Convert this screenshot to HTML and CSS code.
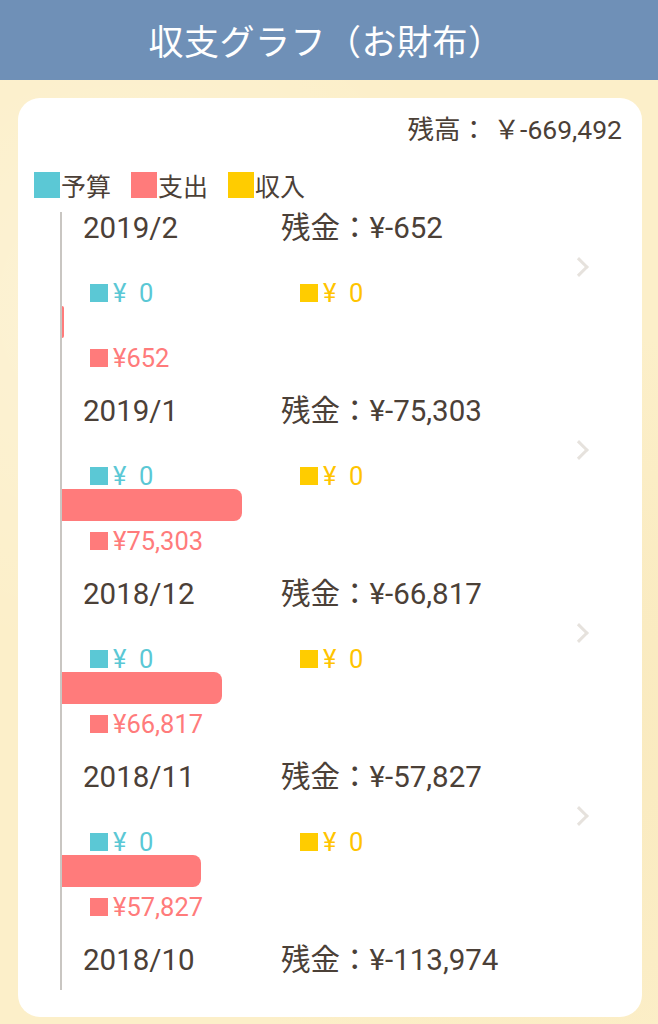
FILE: index.html
```html
<!DOCTYPE html>
<html lang="ja">
<head>
    <meta charset="UTF-8">
    <meta name="viewport" content="width=device-width, initial-scale=1.0">
    <title>収支グラフ（お財布）</title>
    <link rel="stylesheet" href="styles.css">
</head>
<body>
    <header id="title-bar">収支グラフ（お財布）</header>
    <div id="graph-card">
        <div id="balance">残高： ￥-669,492</div>
        <div id="legend">
            <span class="legend-item"><i class="swatch budget"></i>予算</span>
            <span class="legend-item"><i class="swatch expense"></i>支出</span>
            <span class="legend-item"><i class="swatch income"></i>収入</span>
        </div>
        <div id="month-list">
            <div class="month">
                <div class="month-head">
                    <span class="month-date">2019/2</span>
                    <span class="month-rest">残金：¥-652</span>
                </div>
                <div class="month-sub">
                    <span class="amount budget-text"><i class="dot budget"></i>¥&nbsp;&nbsp;0</span>
                    <span class="amount income-text"><i class="dot income"></i>¥&nbsp;&nbsp;0</span>
                </div>
                <div class="bar-row"><div class="bar" style="width: 2px"></div></div>
                <div class="amount expense-text"><i class="dot expense"></i>¥652</div>
                <span class="chevron"></span>
            </div>
            <div class="month">
                <div class="month-head">
                    <span class="month-date">2019/1</span>
                    <span class="month-rest">残金：¥-75,303</span>
                </div>
                <div class="month-sub">
                    <span class="amount budget-text"><i class="dot budget"></i>¥&nbsp;&nbsp;0</span>
                    <span class="amount income-text"><i class="dot income"></i>¥&nbsp;&nbsp;0</span>
                </div>
                <div class="bar-row"><div class="bar" style="width: 180px"></div></div>
                <div class="amount expense-text"><i class="dot expense"></i>¥75,303</div>
                <span class="chevron"></span>
            </div>
            <div class="month">
                <div class="month-head">
                    <span class="month-date">2018/12</span>
                    <span class="month-rest">残金：¥-66,817</span>
                </div>
                <div class="month-sub">
                    <span class="amount budget-text"><i class="dot budget"></i>¥&nbsp;&nbsp;0</span>
                    <span class="amount income-text"><i class="dot income"></i>¥&nbsp;&nbsp;0</span>
                </div>
                <div class="bar-row"><div class="bar" style="width: 160px"></div></div>
                <div class="amount expense-text"><i class="dot expense"></i>¥66,817</div>
                <span class="chevron"></span>
            </div>
            <div class="month">
                <div class="month-head">
                    <span class="month-date">2018/11</span>
                    <span class="month-rest">残金：¥-57,827</span>
                </div>
                <div class="month-sub">
                    <span class="amount budget-text"><i class="dot budget"></i>¥&nbsp;&nbsp;0</span>
                    <span class="amount income-text"><i class="dot income"></i>¥&nbsp;&nbsp;0</span>
                </div>
                <div class="bar-row"><div class="bar" style="width: 139px"></div></div>
                <div class="amount expense-text"><i class="dot expense"></i>¥57,827</div>
                <span class="chevron"></span>
            </div>
            <!-- 一番下の月はスクロールの途中で切れている -->
            <div class="month">
                <div class="month-head">
                    <span class="month-date">2018/10</span>
                    <span class="month-rest">残金：¥-113,974</span>
                </div>
            </div>
        </div>
    </div>
</body>
</html>
```

FILE: styles.css
```css
html, body {
    margin: 0;
    padding: 0;
    height: 100%;
    overflow: hidden;
}
body {
    /* クリーム色の紙っぽい背景 */
    background-color: #fcefc9;
    background-image:
        radial-gradient(circle at 20% 30%, rgba(255, 255, 255, 0.25), transparent 40%),
        radial-gradient(circle at 80% 70%, rgba(240, 214, 150, 0.25), transparent 45%);
    color: #4b4037;
    font-family: Roboto, "Noto Sans CJK JP", sans-serif;
}
#title-bar {
    height: 80px;
    line-height: 80px;
    background-color: #6f90b7;
    color: white;
    text-align: center;
    font-size: 35px;
    font-family: "Noto Sans CJK JP", sans-serif;
    letter-spacing: 0.5px;
    padding-right: 6px;
}
#graph-card {
    margin: 18px 16px 0 18px;
    height: 919px;
    box-sizing: border-box;
    padding: 16px 20px 0 16px;
    background-color: white;
    border-radius: 22px;
}
#balance {
    height: 32px;
    line-height: 32px;
    text-align: right;
    font-size: 26.5px;
}
#legend {
    display: flex;
    gap: 20px;
    margin-top: 26px;
    height: 26px;
    font-size: 25px;
    line-height: 26px;
    font-family: "Noto Sans CJK JP", sans-serif;
}
.legend-item {
    display: flex;
    align-items: center;
}
.swatch {
    display: inline-block;
    width: 26px;
    height: 26px;
    margin-right: 1px;
}
.budget { background-color: #5bc8d5; }
.expense { background-color: #ff7b7b; }
.income { background-color: #ffcc00; }
#month-list {
    margin: 14px 0 0 26px;
    height: 778px;
    border-left: 2px solid #c9c6c2;
    overflow: hidden;
}
.month {
    position: relative;
    padding-bottom: 24px;
}
.month-head {
    display: grid;
    grid-template-columns: 198px auto;
    padding-left: 21px;
    height: 32px;
    line-height: 32px;
    font-size: 29.5px;
}
.month-sub {
    display: grid;
    grid-template-columns: 210px auto;
    margin-top: 36px;
    padding-left: 28px;
}
.amount {
    display: flex;
    align-items: center;
    height: 26px;
    font-size: 25.5px;
}
.dot {
    display: inline-block;
    width: 18px;
    height: 18px;
    margin-right: 5px;
}
.budget-text { color: #5bc8d5; }
.income-text { color: #ffc400; }
.expense-text {
    color: #ff7b7b;
    margin-top: 7px;
    padding-left: 28px;
}
.bar-row {
    height: 32px;
}
.bar {
    height: 32px;
    background-color: #ff7b7b;
    border-radius: 0 8px 8px 0;
}
.chevron {
    position: absolute;
    top: 48px;
    right: 36px;
    width: 11px;
    height: 11px;
    border-top: 3px solid #e6e2dd;
    border-right: 3px solid #e6e2dd;
    transform: rotate(45deg);
}
```
